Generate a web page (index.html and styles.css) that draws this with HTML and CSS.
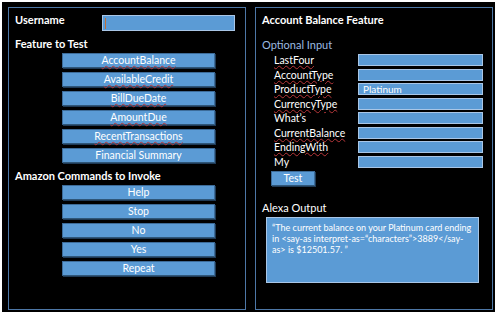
FILE: index.html
```html
<!DOCTYPE html>
<html lang="en">
<head>
  <meta charset="UTF-8">
  <title>Alexa Skill Tester</title>
  <link rel="stylesheet" href="styles.css">
</head>
<body>
  <div class="frame">
    <div class="panel">
      <div class="user-row">
        <span class="heading">Username</span>
        <div class="user-input"><span class="caret"></span></div>
      </div>
      <div class="heading section">Feature to Test</div>
      <div class="btn-list">
        <button type="button" class="btn"><span class="spell">AccountBalance</span></button>
        <button type="button" class="btn"><span class="spell">AvailableCredit</span></button>
        <button type="button" class="btn"><span class="spell">BillDueDate</span></button>
        <button type="button" class="btn"><span class="spell">AmountDue</span></button>
        <button type="button" class="btn"><span class="spell">RecentTransactions</span></button>
        <button type="button" class="btn">Financial Summary</button>
      </div>
      <div class="heading section">Amazon Commands to Invoke</div>
      <div class="btn-list">
        <button type="button" class="btn">Help</button>
        <button type="button" class="btn">Stop</button>
        <button type="button" class="btn">No</button>
        <button type="button" class="btn">Yes</button>
        <button type="button" class="btn">Repeat</button>
      </div>
    </div>

    <div class="panel">
      <div class="heading">Account Balance Feature</div>
      <div class="optional">Optional Input</div>
      <div class="fields">
        <span class="label spell">LastFour</span><div class="field"></div>
        <span class="label spell">AccountType</span><div class="field"></div>
        <span class="label spell">ProductType</span><div class="field">Platinum</div>
        <span class="label spell">CurrencyType</span><div class="field"></div>
        <span class="label">What’s</span><div class="field"></div>
        <span class="label spell">CurrentBalance</span><div class="field"></div>
        <span class="label spell">EndingWith</span><div class="field"></div>
        <span class="label">My</span><div class="field"></div>
      </div>
      <button type="button" class="btn test-btn">Test</button>
      <div class="output-title">Alexa Output</div>
      <div class="output">“The current balance on your Platinum card ending in &lt;say-as interpret-as=“characters”&gt;3889&lt;/say-as&gt; is $12501.57. ”</div>
    </div>
  </div>
</body>
</html>
```

FILE: styles.css
```css
body {
  margin: 0;
  background: #fff;
  font-family: 'Lato', 'Open Sans', sans-serif;
  color: #fff;
}
.frame {
  width: 493px;
  height: 310px;
  margin: 2px;
  box-sizing: border-box;
  padding: 5px 2px 3px 6px;
  background: #000;
  display: flex;
  gap: 9px;
}
.panel {
  width: 238px;
  height: 303px;
  box-sizing: border-box;
  border: 1px solid #4d77a6;
  padding: 5px 6px 0 6px;
}
.heading {
  font-size: 11px;
  font-weight: 700;
  line-height: 13px;
}
.section {
  margin-top: 6px;
}
.user-row {
  display: flex;
  height: 18px;
}
.user-row .heading {
  width: 87px;
}
.user-input {
  width: 133px;
  height: 16px;
  margin-top: 2px;
  box-sizing: border-box;
  background: #5b9bd5;
  border: 1px solid #a9c6e6;
  padding: 2px 0 0 2px;
}
.caret {
  display: block;
  width: 1px;
  height: 11px;
  background: #c0703a;
}
.btn-list {
  display: flex;
  flex-direction: column;
  gap: 4px;
  margin: 3px 0 0 47px;
}
.btn {
  width: 153px;
  height: 15px;
  padding: 0;
  box-sizing: border-box;
  background: #5b9bd5;
  border: 1px solid #3d6c99;
  border-bottom-color: #2f5678;
  box-shadow: 1px 1px 0 #1f3a55;
  color: #fff;
  font-family: inherit;
  font-size: 10.5px;
  line-height: 13px;
  text-align: center;
}
.spell {
  text-decoration: underline wavy #b8373a;
  text-decoration-thickness: 1px;
  text-underline-offset: 1px;
}
.optional {
  margin-top: 12px;
  font-size: 11px;
  line-height: 13px;
  color: #9dbbe0;
}
.fields {
  display: grid;
  grid-template-columns: 84px 125px;
  grid-auto-rows: 12px;
  row-gap: 2.5px;
  margin: 3px 0 0 12px;
  align-items: center;
}
.label {
  font-size: 10.5px;
  line-height: 12px;
}
.field {
  height: 12px;
  box-sizing: border-box;
  background: #5b9bd5;
  border: 1px solid #a9c6e6;
  font-size: 10px;
  line-height: 10px;
  padding-left: 4px;
}
.test-btn {
  display: block;
  width: 44px;
  margin: 3px 0 0 9px;
}
.output-title {
  margin-top: 15px;
  font-size: 11px;
  line-height: 13px;
}
.output {
  width: 213px;
  height: 66px;
  box-sizing: border-box;
  margin: 3px 0 0 4px;
  padding: 4px 5px;
  background: #5b9bd5;
  border: 1px solid #a9c6e6;
  font-size: 9px;
  line-height: 11px;
}
```
